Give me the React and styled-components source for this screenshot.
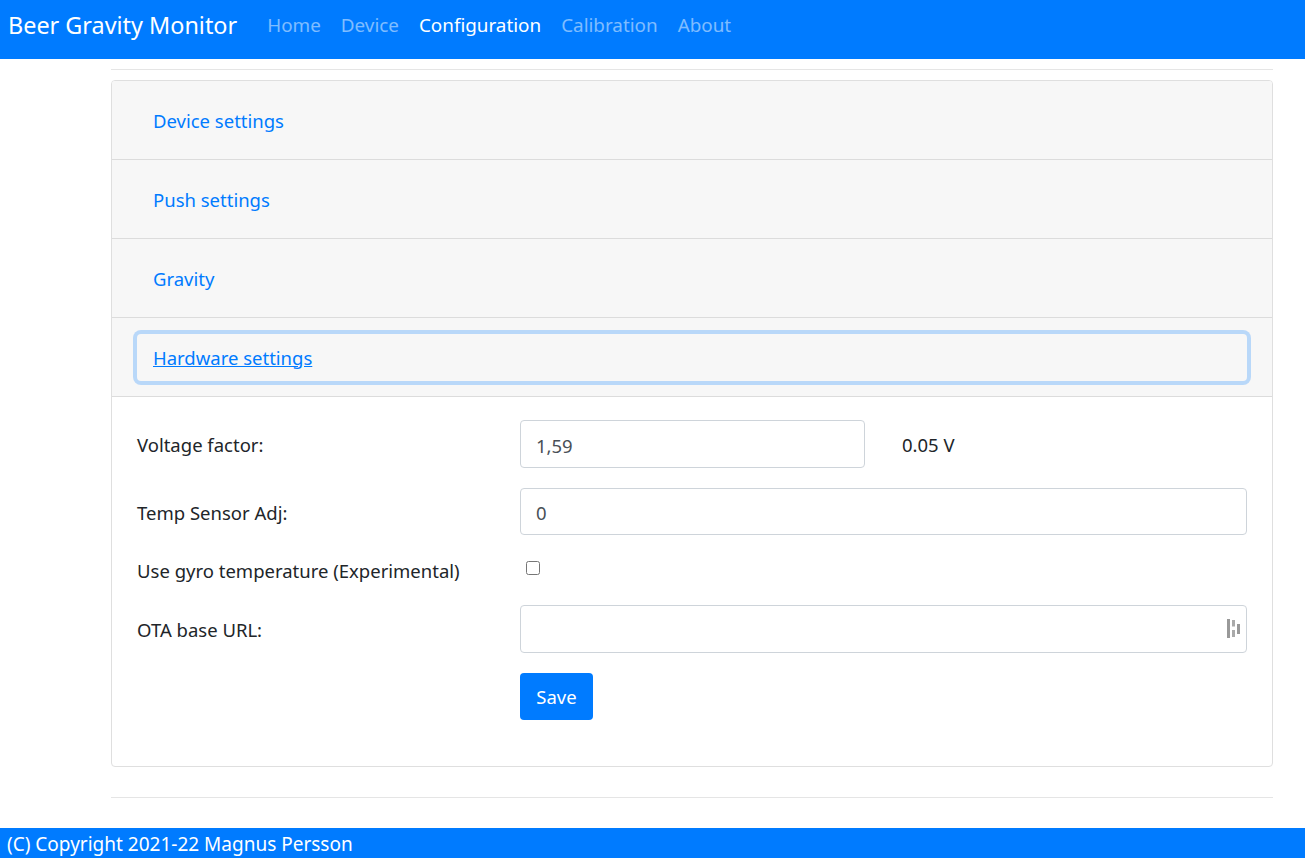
import React from 'react';
import styled, { createGlobalStyle } from 'styled-components';

const Global = createGlobalStyle`
  html, body { margin: 0; padding: 0; background: #fff; }
  body { font-family: "Noto Sans", "Open Sans", sans-serif; font-size: 18.5px; line-height: 1.5; color: #212529; }
  * { box-sizing: border-box; }
`;
const Nav = styled.nav`
  height: 59px; background: #007bff; display: flex; align-items: center; padding: 0 8px 8px;
`;
const Brand = styled.a`
  color: #fff; font-size: 23.4px; margin-right: 20px; line-height: 1.5; white-space: nowrap;
`;
const NavLink = styled.a`
  color: ${p => (p.$active ? '#fff' : 'rgba(255,255,255,.5)')};
  padding: 0 10px; font-size: 18.85px; white-space: nowrap;
`;
const Main = styled.main`
  margin: 0 32px 0 111px;
  padding-top: 10px;
`;
const Rule = styled.hr`
  border: 0; border-top: 1px solid #e5e5e5; margin: 0;
`;
const Card = styled.section`
  margin: 10px 0 30px; border: 1px solid #dfdfdf; border-radius: 4px; overflow: hidden; height: 687px;
`;
const Header = styled.div`
  height: 79px; padding: 15px 25px; background: #f7f7f7; border-bottom: 1px solid #dcdcdc; display: flex; align-items: center;
`;
const HeaderButton = styled.button`
  flex: 1; height: 47px; border: 0; background: transparent; text-align: left; padding: 1px 17px 0 16px;
  font: inherit; color: #007bff; border-radius: 4px;
  text-decoration: ${p => (p.$focus ? 'underline' : 'none')};
  box-shadow: ${p => (p.$focus ? '0 0 0 4px rgba(0,123,255,.25)' : 'none')};
`;
const Body = styled.div`
  padding: 23px 25px 0;
`;
const FormRow = styled.div`
  display: grid; grid-template-columns: 383px 1fr; align-items: center; margin-bottom: 20px; min-height: ${p => p.$min || 0}px;
`;
const Label = styled.label`
  white-space: nowrap; color: #212529; padding-top: 2px;
`;
const Pair = styled.div`
  display: grid; grid-template-columns: 345px 1fr; align-items: center; column-gap: 37px;
`;
const Value = styled.span`
  padding-top: 2px;
`;
const Input = styled.input`
  display: block; width: 100%; height: ${p => p.$h || 48}px; padding: 2px 15px 0; border: 1px solid #ced4da; border-radius: 4px;
  font: inherit; color: #495057; background: #fff; outline: none;
`;
const InputWrap = styled.div`
  position: relative;
`;
const FieldIcon = styled.svg`
  position: absolute; right: 6px; top: 14px; width: 14px; height: 19px;
`;
const Check = styled.input`
  width: 14px; height: 14px; margin: 0 0 4px 6px; display: block;
`;
const Save = styled.button`
  display: block; width: 73px; height: 47px; background: #007bff; color: #fff; border: 0; border-radius: 4px; font: inherit; padding: 0;
`;
const Footer = styled.footer`
  height: 30px; margin-top: 30px; background: #007bff; color: #fff; padding-left: 7px; font-size: 19px; line-height: 32px; white-space: nowrap;
`;

const sections = ['Device settings', 'Push settings', 'Gravity'];
const links = ['Home', 'Device', 'Configuration', 'Calibration', 'About'];

export default function App() {
  return (
    <>
      <Global />
      <Nav>
        <Brand>Beer Gravity Monitor</Brand>
        {links.map(l => <NavLink key={l} $active={l === 'Configuration'}>{l}</NavLink>)}
      </Nav>
      <Main>
        <Rule />
        <Card>
          {sections.map(s => <Header key={s}><HeaderButton>{s}</HeaderButton></Header>)}
          <Header><HeaderButton $focus>Hardware settings</HeaderButton></Header>
          <Body>
            <FormRow>
              <Label>Voltage factor:</Label>
              <Pair>
                <Input defaultValue="1,59" />
                <Value>0.05 V</Value>
              </Pair>
            </FormRow>
            <FormRow>
              <Label>Temp Sensor Adj:</Label>
              <Input $h={47} defaultValue="0" />
            </FormRow>
            <FormRow $min={30}>
              <Label>Use gyro temperature (Experimental)</Label>
              <Check type="checkbox" />
            </FormRow>
            <FormRow>
              <Label>OTA base URL:</Label>
              <InputWrap>
                <Input />
                <FieldIcon viewBox="0 0 14 19">
                  <rect x="0" y="0" width="3" height="19" fill="#999" />
                  <rect x="5" y="1" width="3" height="6.5" fill="#aaa" />
                  <rect x="5" y="11" width="3" height="7" fill="#aaa" />
                  <rect x="10" y="5" width="3" height="10" fill="#999" />
                </FieldIcon>
              </InputWrap>
            </FormRow>
            <FormRow>
              <span />
              <Save>Save</Save>
            </FormRow>
          </Body>
        </Card>
        <Rule />
      </Main>
      <Footer>(C) Copyright 2021-22 Magnus Persson</Footer>
    </>
  );
}
